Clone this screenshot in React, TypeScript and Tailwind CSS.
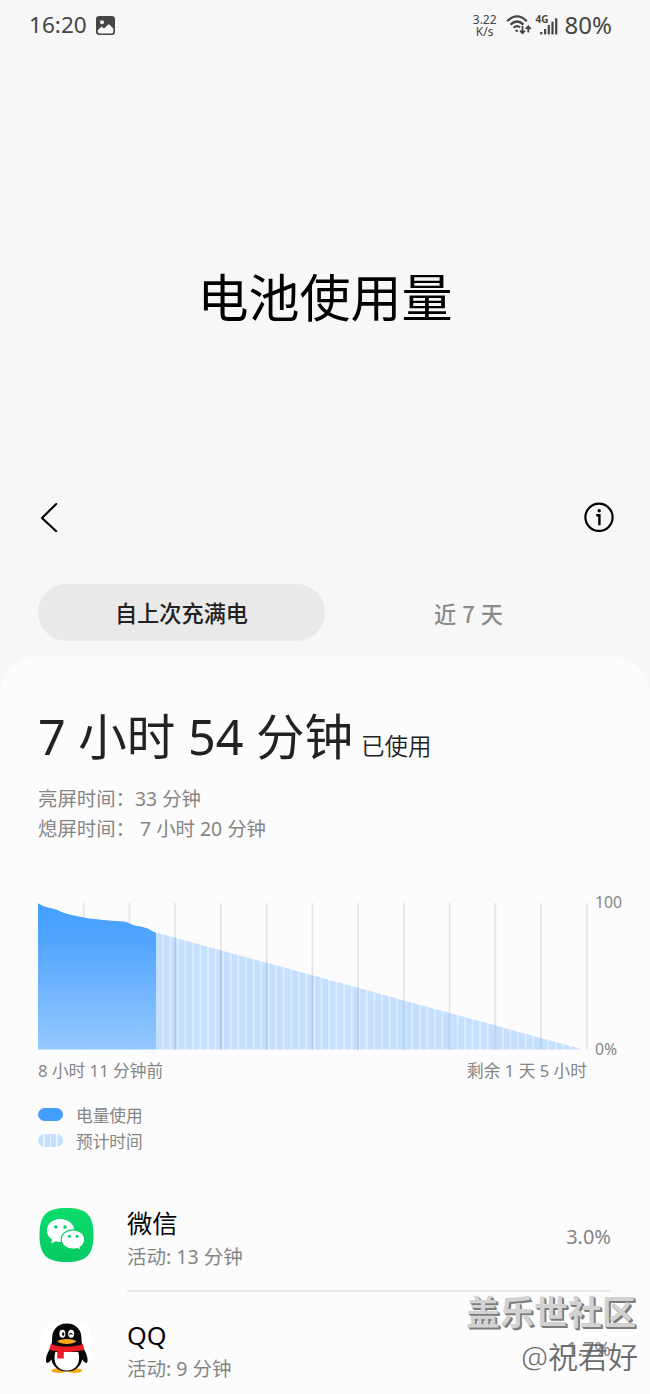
import type { ReactNode } from "react";

const gridLines = [1, 2, 3, 4, 5, 6, 7, 8, 9, 10, 11, 12];

const StatusBar = () => {
  return (
    <div className="flex h-[50px] items-center justify-between pl-[29px] pr-[38px] text-[#454545]">
      <div className="flex items-center gap-[9px]">
        <p className="text-[22.6px] leading-[52px]">16:20</p>
        <svg className="h-[19px] w-[19px]" viewBox="0 0 19 19">
          <rect width="19" height="19" rx="3.2" fill="#454545" />
          <circle cx="6" cy="6.2" r="2" fill="#f7f7f7" />
          <path
            d="M1.8 14.2 L5.6 10.4 L8 12.6 L12.8 8 L17.3 12.4 V15.8 Q17.3 17.4 15.8 17.4 H3.3 Q1.8 17.4 1.8 15.8Z"
            fill="#f7f7f7"
          />
        </svg>
      </div>
      <div className="flex items-center">
        <div className="mr-[9px] pt-[2px] text-center text-[12px] leading-[12px]">
          <p>3.22</p>
          <p>K/s</p>
        </div>
        <svg
          className="mr-[4px] h-[22px] w-[26px]"
          viewBox="0 0 26 22"
          fill="none"
          stroke="#454545"
        >
          <path
            d="M1.2 7.2 Q11 -2.4 20.8 7.2 M4.5 10.6 Q11 4.4 17.5 10.6 M7.6 13.8 Q11 10.8 14 13.4"
            strokeWidth="2.2"
          />
          <circle cx="10.7" cy="16.8" r="1.3" fill="#454545" stroke="none" />
          <path
            d="M16.5 12 V19 M14 16.7 L16.5 19.3 L19 16.7 M22.3 18.6 V12.6 M19.8 15 L22.3 12.3 L24.8 15"
            strokeWidth="1.8"
          />
        </svg>
        <div className="relative mr-[7px] h-[22px] w-[22px]">
          <span className="absolute left-0 top-[1px] text-[10px] font-bold leading-[9px]">
            4G
          </span>
          <svg className="h-[22px] w-[23px]" viewBox="0 0 23 22" fill="#454545">
            <rect x="4.2" y="18" width="2.2" height="2.4" />
            <rect x="8" y="15" width="2.2" height="5.4" />
            <rect x="11.7" y="11" width="2.2" height="9.4" />
            <rect x="15.4" y="7.6" width="2.2" height="12.8" />
            <rect x="19.1" y="4.2" width="2.2" height="16.2" />
          </svg>
        </div>
        <p className="text-[24px] leading-[50px]">80%</p>
      </div>
    </div>
  );
};

const UsageChart = () => {
  return (
    <div className="mt-[56px]">
      <div className="flex h-[152px] gap-[7px]">
        <svg className="h-[152px] w-[550px] shrink-0" viewBox="0 -4 550 152">
          <defs>
            <linearGradient id="used" x1="0" y1="0" x2="0" y2="1">
              <stop offset="0" stopColor="#429fff" />
              <stop offset="0.25" stopColor="#51a5fe" />
              <stop offset="1" stopColor="#95c8ff" />
            </linearGradient>
            <pattern
              id="stripes"
              x="118"
              y="0"
              width="7.56"
              height="10"
              patternUnits="userSpaceOnUse"
            >
              <rect width="7.56" height="10" fill="#c5dfff" />
              <rect x="6" width="1.56" height="10" fill="#e0efff" />
            </pattern>
            <clipPath id="estimate">
              <path d="M118 29.5 L545 146.5 H118Z" />
            </clipPath>
          </defs>
          {gridLines.map((n) => (
            <rect
              key={n}
              x={n * 45.73 - 0.9}
              y="0"
              width="1.8"
              height="146.5"
              fill="#e6e6e6"
            />
          ))}
          <path d="M118 29.5 L545 146.5 H118Z" fill="url(#stripes)" />
          <g clipPath="url(#estimate)">
            {gridLines.map((n) => (
              <rect
                key={n}
                x={n * 45.73 - 0.9}
                y="0"
                width="1.8"
                height="147"
                fill="#8fa9c8"
                opacity="0.4"
              />
            ))}
          </g>
          <path
            d="M0 0 C3 3 7 3.5 18 6.6 C22 8 23 9.5 32 11.7 C40 13 46 15 57 16 C68 17.5 74 17.6 86 18.6 C91 19.5 92 21.5 97 22.5 C105 24 110 25 114 28 L118 29.8 V146.5 H0Z"
            fill="url(#used)"
          />
        </svg>
        <div className="-mt-[2px] -mb-[4px] flex shrink-0 flex-col justify-between text-[15.8px] leading-[11px] text-[#858585]">
          <p>100</p>
          <p>0%</p>
        </div>
      </div>
      <div className="mt-[8px] flex w-[549px] justify-between text-[16.7px] leading-[24px] text-[#858585]">
        <p>8 小时 11 分钟前</p>
        <p>剩余 1 天 5 小时</p>
      </div>
    </div>
  );
};

const Legend = () => {
  return (
    <ul className="mt-[20px] text-[16.7px] leading-[26px] text-[#858585]">
      <li className="flex items-center gap-[13px]">
        <span className="mb-[4px] h-[13px] w-[25px] rounded-full bg-[#429fff]" />
        电量使用
      </li>
      <li className="flex items-center gap-[13px]">
        <span className="mb-[4px] flex h-[13px] w-[25px] justify-evenly overflow-hidden rounded-full bg-[#c5dfff]">
          <i className="w-[1.5px] bg-[#e6f2ff]" />
          <i className="w-[1.5px] bg-[#e6f2ff]" />
          <i className="w-[1.5px] bg-[#e6f2ff]" />
        </span>
        预计时间
      </li>
    </ul>
  );
};

const WeChatIcon = () => {
  return (
    <svg className="h-[56px] w-[56px]" viewBox="0 0 56 56">
      <defs>
        <linearGradient id="wechat" x1="0" y1="0" x2="0" y2="1">
          <stop offset="0" stopColor="#0bdc6c" />
          <stop offset="1" stopColor="#07c964" />
        </linearGradient>
      </defs>
      <path
        d="M28.5 1 C48.5 1 55.5 8 55.5 28 C55.5 48 48.5 55 28.5 55 C8.5 55 1.5 48 1.5 28 C1.5 8 8.5 1 28.5 1Z"
        fill="url(#wechat)"
      />
      <path
        d="M22.3 12 C14.5 12 8.9 17 8.9 23.6 C8.9 27.4 10.9 30.6 14.2 32.8 L13.2 36.4 L17.6 34.2 C19.2 34.7 20.6 35 22.3 35 C30 35 36.2 30 36.2 23.5 C36.2 17 30 12 22.3 12Z"
        fill="#fff"
      />
      <path
        d="M35 22.8 C28.4 22.8 23.2 27.1 23.2 32.5 C23.2 37.9 28.4 42.2 35 42.2 C36.5 42.2 38 42 39.4 41.6 L43.2 43.5 L42.2 40.2 C45 38.4 46.7 35.6 46.7 32.5 C46.7 27.1 41.5 22.8 35 22.8Z"
        fill="#fff"
        stroke="#08d068"
        strokeWidth="1.2"
      />
      <g fill="#08cf67">
        <circle cx="17.9" cy="20" r="1.8" />
        <circle cx="27" cy="20" r="1.8" />
        <circle cx="31.2" cy="29.3" r="1.5" />
        <circle cx="39.1" cy="29.3" r="1.5" />
      </g>
    </svg>
  );
};

const QQIcon = () => {
  return (
    <svg className="h-[56px] w-[56px]" viewBox="0 0 56 56">
      <path
        d="M28.5 1 C48.5 1 55.5 8 55.5 28 C55.5 48 48.5 55 28.5 55 C8.5 55 1.5 48 1.5 28 C1.5 8 8.5 1 28.5 1Z"
        fill="#fff"
        stroke="#f5f5f5"
        strokeWidth="0.7"
      />
      <g transform="translate(0.8 0.9)">
        <ellipse cx="20" cy="50.7" rx="7.5" ry="2.4" fill="#f6a814" />
        <ellipse cx="36" cy="50.7" rx="7.5" ry="2.4" fill="#f6a814" />
        <path
          d="M28 3.6 C18 3.6 13 11 13.3 19 C13.4 22 12.5 24.5 12 27 C8.5 33 6.6 38 7.4 42 C8 44.5 10.5 42.5 12.6 39.5 C14 47 20 51.5 28 51.5 C36 51.5 42 47 43.4 39.5 C45.5 42.5 48 44.5 48.6 42 C49.4 38 47.5 33 44 27 C43.5 24.5 42.6 22 42.7 19 C43 11 38 3.6 28 3.6Z"
          fill="#080808"
        />
        <path
          d="M16.5 32 H39.5 C42.5 43 37 50.5 28 50.5 C19 50.5 13.5 43 16.5 32Z"
          fill="#fff"
        />
        <path
          d="M11.8 24 C21 27.5 35 27.5 44.2 24 L45.4 30.2 C41 31.4 35 32 28 32 C21 32 15.5 31.4 10.8 30.2Z"
          fill="#e91c24"
        />
        <path d="M18.5 30.5 H25 V38.6 H18.5Z" fill="#e91c24" />
        <ellipse cx="23.6" cy="13.9" rx="3" ry="4" fill="#fff" />
        <ellipse cx="32.3" cy="13.9" rx="3" ry="4" fill="#fff" />
        <ellipse cx="24.4" cy="14.2" rx="1.2" ry="1.8" fill="#080808" />
        <path
          d="M30.6 15 Q32.2 11.8 33.6 15"
          fill="none"
          stroke="#080808"
          strokeWidth="1.1"
        />
        <path
          d="M18.5 21.3 C23 18.2 33 18.2 37.5 21.3 C34 25 22 25 18.5 21.3Z"
          fill="#f9a91a"
        />
      </g>
    </svg>
  );
};

type AppRowProps = {
  icon: ReactNode;
  name: string;
  time: string;
  percent: string;
};

const AppRow = ({ icon, name, time, percent }: AppRowProps) => {
  return (
    <li className="flex h-[110px] items-center">
      {icon}
      <div className="ml-[33px] flex-1 pt-[10px]">
        <p className="text-[25.3px] leading-[34px] text-[#050505]">{name}</p>
        <p className="text-[19.5px] leading-[34px] text-[#858585]">{time}</p>
      </div>
      <p className="pt-[4px] text-[20px] text-[#858585]">{percent}</p>
    </li>
  );
};

const App = () => {
  return (
    <div className="relative h-[1394px] w-[650px] overflow-hidden bg-[#f7f7f7] font-['Noto_Sans','Noto_Sans_CJK_SC',sans-serif]">
      <StatusBar />
      <h1 className="flex h-[442px] items-center justify-center pt-[52px] text-[51px] text-black">
        电池使用量
      </h1>
      <div className="flex h-[50px] items-center justify-between pl-[40px] pr-[36px]">
        <svg
          className="h-[30px] w-[18px]"
          viewBox="0 0 18 30"
          fill="none"
          stroke="#000"
          strokeWidth="2.1"
          strokeLinecap="round"
          strokeLinejoin="round"
        >
          <path d="M16.2 2 L2 16 L16.2 29.2" />
        </svg>
        <svg
          className="h-[30px] w-[30px]"
          viewBox="0 0 30 30"
          fill="none"
          stroke="#000"
          strokeWidth="2.2"
        >
          <circle cx="15" cy="15.3" r="13.6" />
          <path d="M12.2 13.2 H15.4 V23.2" strokeWidth="2.4" />
          <circle cx="15.2" cy="8.8" r="1.7" fill="#000" stroke="none" />
        </svg>
      </div>
      <div className="mt-[42px] flex h-[57px] px-[38px] text-[22.2px] font-medium leading-[59px]">
        <p className="w-[287px] rounded-full bg-[#e9e9e9] text-center text-[#222]">
          自上次充满电
        </p>
        <p className="w-[287px] text-center font-['Noto_Sans_CJK_SC',sans-serif] text-[#8b8b8b] [word-spacing:1px]">
          近 7 天
        </p>
      </div>
      <main className="mt-[15px] h-[760px] rounded-t-[38px] bg-[#fcfcfc] px-[38px] pt-[46px]">
        <div className="flex items-baseline gap-[8px] text-[#222]">
          <h2 className="text-[48.5px] leading-[68px]">7 小时 54 分钟</h2>
          <p className="text-[23.5px] font-[350]">已使用</p>
        </div>
        <div className="mt-[14px] mb-[-1px] text-[19.4px] leading-[30px] text-[#858585]">
          <p>亮屏时间：33 分钟</p>
          <p>熄屏时间： 7 小时 20 分钟</p>
        </div>
        <UsageChart />
        <Legend />
        <ul className="mt-[25px] pr-[1px]">
          <AppRow
            icon={<WeChatIcon />}
            name="微信"
            time="活动: 13 分钟"
            percent="3.0%"
          />
          <li className="ml-[89px] h-[2px] bg-[#e8e8e8]" />
          <AppRow
            icon={<QQIcon />}
            name="QQ"
            time="活动: 9 分钟"
            percent="1.7%"
          />
        </ul>
      </main>
      <div className="absolute right-[12px] top-[1291px] text-right">
        <p className="pr-[2px] text-[34px] font-bold leading-[42px] text-[#d2d2d2] [text-shadow:1px_1px_0_#7c7c7c,2px_2px_0_#7c7c7c]">
          盖乐世社区
        </p>
        <p className="text-[30px] font-[350] leading-[48px] text-[#6c6c6c]">
          @祝君好
        </p>
      </div>
    </div>
  );
};

export default App;
